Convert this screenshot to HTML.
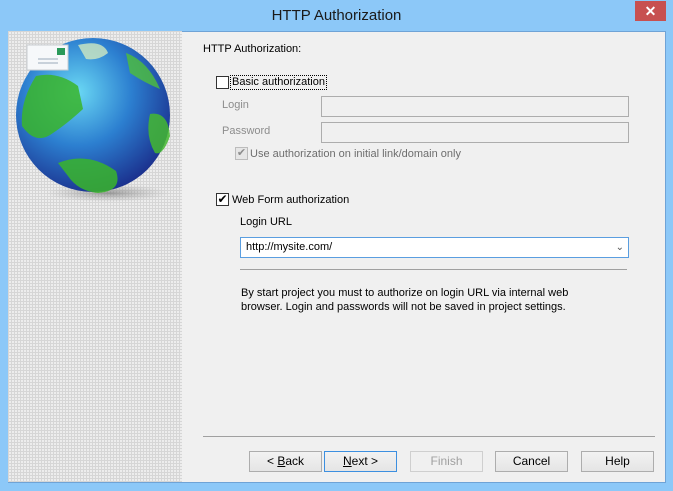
<!DOCTYPE html>
<html><head><style>
*{margin:0;padding:0;box-sizing:border-box}
body{width:673px;height:491px;background:#8cc8f8;position:relative;overflow:hidden;font-family:"Liberation Sans",sans-serif;font-size:11px;color:#000}
.a{position:absolute}
.title{left:0;top:0;width:673px;height:31px;text-align:center;line-height:31px;font-size:15px;color:#1a1a1a}
.close{left:635px;top:1px;width:31px;height:20px;background:#c75050;color:#fff;text-align:center;line-height:20px;font-size:14px;font-weight:bold}
.client{left:8px;top:31px;width:658px;height:452px;background:#f0f0f0;border:1px solid #6fa3d6}
.left{left:8px;top:31px;width:174px;height:451px;background-color:#ededed;background-image:linear-gradient(90deg,#d6d6d6 1px,transparent 1px),linear-gradient(#d6d6d6 1px,transparent 1px);background-size:3px 3px}
.cb{width:13px;height:13px;border:1px solid #333;background:#fff}
.inp{height:21px;border:1px solid #adadad;background:#f0f0f0}
.btn{top:451px;width:73px;height:21px;border:1px solid #adadad;background:linear-gradient(#f2f2f2,#e5e5e5);text-align:center;line-height:19px;font-size:12px}
.gray{color:#8d8d8d}
</style></head><body>
<div class="a title">HTTP Authorization</div>
<div class="a close">✕</div>
<div class="a client"></div>
<div class="a left"></div>
<svg class="a" style="left:8px;top:31px" width="174" height="180">
<defs>
<radialGradient id="g" cx="0.4" cy="0.35" r="0.7"><stop offset="0" stop-color="#6ad8f4"/><stop offset="0.5" stop-color="#2c7fd0"/><stop offset="1" stop-color="#1a2c8a"/></radialGradient>
<radialGradient id="sh" cx="0.5" cy="0.5" r="0.5"><stop offset="0" stop-color="#666" stop-opacity=".6"/><stop offset="1" stop-color="#999" stop-opacity="0"/></radialGradient>
</defs>
<ellipse cx="100" cy="162" rx="62" ry="9" fill="url(#sh)"/>
<circle cx="85" cy="84" r="77" fill="url(#g)"/>
<path d="M28 45 Q50 40 70 55 L75 78 Q60 92 45 102 Q28 115 14 95 Q12 70 28 45Z" fill="#3ab52a" opacity=".85"/>
<path d="M50 132 Q80 120 108 140 Q115 160 90 162 Q70 160 60 145Z" fill="#3ab52a" opacity=".85"/>
<path d="M142 83 Q160 80 162 105 Q155 125 147 122 Q137 105 142 83Z" fill="#44b830" opacity=".85"/>
<path d="M118 22 Q140 30 152 58 Q137 52 122 42Z" fill="#4fbf3a" opacity=".8"/>
<path d="M70 14 Q95 8 100 22 Q90 30 78 28Z" fill="#cfe8c0" opacity=".8"/>
<rect x="19" y="14" width="41" height="25" fill="#f6f8fa" stroke="#c8ccd0"/>
<rect x="49" y="17" width="8" height="7" fill="#2a9a5a"/>
<line x1="30" y1="28" x2="50" y2="28" stroke="#9ab"/><line x1="30" y1="32" x2="50" y2="32" stroke="#9ab"/>
</svg>
<div class="a" style="left:203px;top:43px">HTTP Authorization:</div>
<div class="a cb" style="left:216px;top:76px"></div>
<div class="a" style="left:230px;top:75px;border:1px dotted #000;padding:0 1px;line-height:13px">Basic authorization</div>
<div class="a gray" style="left:222px;top:99px">Login</div>
<div class="a inp" style="left:321px;top:96px;width:308px"></div>
<div class="a gray" style="left:222px;top:125px">Password</div>
<div class="a inp" style="left:321px;top:122px;width:308px"></div>
<div class="a cb" style="left:235px;top:147px;border-color:#bcbcbc;background:#e6e6e6;color:#8d8d8d;font-size:11px;line-height:11px;text-align:center">✔</div>
<div class="a gray" style="left:250px;top:148px;color:#6d6d6d">Use authorization on initial link/domain only</div>
<div class="a cb" style="left:216px;top:193px;font-size:12px;line-height:11px;text-align:center">✔</div>
<div class="a" style="left:232px;top:194px">Web Form authorization</div>
<div class="a" style="left:240px;top:216px">Login URL</div>
<div class="a" style="left:240px;top:237px;width:389px;height:21px;border:1px solid #5a9ee0;background:#fff;padding-left:5px;line-height:19px">http://mysite.com/<span style="position:absolute;right:4px;top:0;color:#555;font-size:10px">&#8964;</span></div>
<div class="a" style="left:240px;top:269px;width:387px;height:1px;background:#a0a0a0"></div>
<div class="a" style="left:241px;top:286px;line-height:14px">By start project you must to authorize on login URL via internal web<br>browser. Login and passwords will not be saved in project settings.</div>
<div class="a" style="left:203px;top:436px;width:452px;height:1px;background:#a0a0a0"></div>
<div class="a btn" style="left:249px">&lt; <u>B</u>ack</div>
<div class="a btn" style="left:324px;border-color:#3c8fe0"><u>N</u>ext &gt;</div>
<div class="a btn gray" style="left:410px;border-color:#cfcfcf;background:#f0f0f0;color:#a0a0a0">Finish</div>
<div class="a btn" style="left:495px">Cancel</div>
<div class="a btn" style="left:581px">Help</div>
</body></html>
